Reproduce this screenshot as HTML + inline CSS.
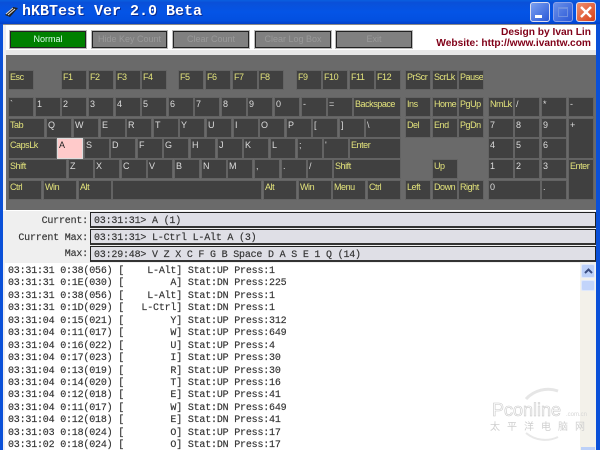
<!DOCTYPE html>
<html><head><meta charset="utf-8">
<style>
html,body{margin:0;padding:0}
#w{position:relative;width:600px;height:450px;overflow:hidden;background:#fff;font-family:"Liberation Sans",sans-serif}
#w div,#w b,#w i,#w pre{position:absolute;display:block;margin:0;font-style:normal}
#tb{left:0;top:0;width:600px;height:24px;background:linear-gradient(#0a5fe0 0,#0a50d8 10%,#0454e6 50%,#0350e0 85%,#0340c8 100%)}
#t{left:22px;top:3px;font:bold 15px/18px "Liberation Mono",monospace;color:#fff;white-space:pre;text-shadow:1px 1px 0 #0a2a90}
.bt{width:20px;height:20px;top:2px;border:1px solid #dde;box-sizing:border-box;border-radius:3px}
.btn{top:31px;height:17px;box-sizing:border-box;border:1px solid #222;outline:1px solid #bbb;background:#808080;color:#999;font-size:9px;line-height:15px;text-align:center;white-space:nowrap}
#kb{left:6px;top:55px;width:590px;height:155px;background:#6a6a6a}
.k{background:#404040;box-sizing:border-box;border:1px solid #636363;color:#e4e47c;font-weight:normal;font-size:9px;letter-spacing:-.45px;line-height:11px;padding:1px 0 0 1px;white-space:nowrap;overflow:hidden}
.n{color:#ddd}
.r1{top:70px;height:20px}.r2{top:97px;height:20px}.r3{top:118px;height:20px}.r4{top:138px;height:21px}.r5{top:159px;height:20px}.r6{top:180px;height:20px}
.u{width:26px}
.f{left:90px;width:506px;height:16px;box-sizing:border-box;border:1px solid #222;border-bottom:2px solid #333;background:#dfdfe6;font:10px/17px "Liberation Mono",monospace;color:#333;padding-left:3px;white-space:pre;letter-spacing:-.2px;-webkit-text-stroke:.15px #333}
.l{left:0;width:88px;text-align:right;font:10px/15px "Liberation Mono",monospace;color:#333;white-space:pre;letter-spacing:-.2px;-webkit-text-stroke:.15px #333}
#log{left:8px;top:266px;font:10px/12.43px "Liberation Mono",monospace;color:#333;letter-spacing:-.2px;white-space:pre;-webkit-text-stroke:.15px #333}
</style></head><body><div id="w">
<div style="left:3px;top:24px;width:594px;height:426px;background:#eeeef2"></div>
<div style="left:6px;top:24px;width:590px;height:31px;background:#fff;border-top:1px solid #999;box-sizing:border-box"></div>
<div style="left:6px;top:50px;width:590px;height:5px;background:#e8e8e8"></div>
<div id="tb"></div>
<div style="left:0;top:24px;width:3px;height:426px;background:#0a50d8"></div>
<div style="left:596px;top:24px;width:4px;height:426px;background:#0a50d8"></div>
<div style="left:3px;top:24px;width:593px;height:1px;background:#8a8a8a"></div>
<svg style="position:absolute;left:3px;top:5px" width="16" height="13" viewBox="0 0 16 13"><path d="M2 10 L10 2 L15 3 L7 12 Z" fill="#222"/><path d="M3 9 L10 3 M5 10 L12 4" stroke="#ddd" stroke-width="1"/></svg>
<div id="t">hKBTest Ver 2.0 Beta</div>
<div class="bt" style="left:530px;background:linear-gradient(135deg,#7ba0f0,#2a58d8)"><i style="left:4px;top:12px;width:7px;height:3px;background:#fff"></i></div>
<div class="bt" style="left:553px;background:linear-gradient(135deg,#6a90e8,#2a58d8);border-color:#88a0e8"><i style="left:4px;top:4px;width:10px;height:10px;border:1px solid #6f90e0;border-top-width:2px;box-sizing:border-box"></i></div>
<div class="bt" style="left:576px;background:linear-gradient(135deg,#ee9070,#d84018)"><svg style="position:absolute;left:2px;top:2px" width="14" height="14"><path d="M2 2 L12 12 M12 2 L2 12" stroke="#fff" stroke-width="2.4"/></svg></div>

<div class="btn" style="left:10px;width:76px;background:#008000;color:#dfe;">Normal</div>
<div class="btn" style="left:92px;width:75px">Hide Key Count</div>
<div class="btn" style="left:173px;width:76px">Clear Count</div>
<div class="btn" style="left:255px;width:76px">Clear Log Box</div>
<div class="btn" style="left:336px;width:76px">Exit</div>
<div style="right:9px;top:27px;text-align:right;font:bold 10.2px/11px 'Liberation Sans',sans-serif;color:#800018;white-space:nowrap">Design by Ivan Lin<br>Website: http://www.ivantw.com</div>

<div id="kb"></div>
<b class="k r1 u" style="left:8px">Esc</b>
<b class="k r1 u" style="left:61px">F1</b><b class="k r1 u" style="left:88px">F2</b><b class="k r1 u" style="left:115px">F3</b><b class="k r1 u" style="left:141px">F4</b>
<b class="k r1 u" style="left:178px">F5</b><b class="k r1 u" style="left:205px">F6</b><b class="k r1 u" style="left:232px">F7</b><b class="k r1 u" style="left:258px">F8</b>
<b class="k r1 u" style="left:296px">F9</b><b class="k r1 u" style="left:322px">F10</b><b class="k r1 u" style="left:349px">F11</b><b class="k r1 u" style="left:375px">F12</b>
<b class="k r1 u" style="left:405px">PrScr</b><b class="k r1 u" style="left:432px">ScrLk</b><b class="k r1 u" style="left:458px">Pause</b>

<b class="k n r2 u" style="left:8px">`</b><b class="k n r2 u" style="left:35px">1</b><b class="k n r2 u" style="left:61px">2</b><b class="k n r2 u" style="left:88px">3</b><b class="k n r2 u" style="left:115px">4</b><b class="k n r2 u" style="left:141px">5</b><b class="k n r2 u" style="left:168px">6</b><b class="k n r2 u" style="left:194px">7</b><b class="k n r2 u" style="left:221px">8</b><b class="k n r2 u" style="left:247px">9</b><b class="k n r2 u" style="left:274px">0</b><b class="k n r2 u" style="left:301px">-</b><b class="k n r2 u" style="left:327px">=</b>
<b class="k r2" style="left:353px;width:48px">Backspace</b>
<b class="k r2 u" style="left:405px">Ins</b><b class="k r2 u" style="left:432px">Home</b><b class="k r2 u" style="left:458px">PgUp</b>
<b class="k r2 u" style="left:488px">NmLk</b><b class="k n r2 u" style="left:514px">/</b><b class="k n r2 u" style="left:541px">*</b><b class="k n r2 u" style="left:568px">-</b>

<b class="k r3" style="left:8px;width:37px">Tab</b>
<b class="k n r3 u" style="left:46px">Q</b><b class="k n r3 u" style="left:73px">W</b><b class="k n r3 u" style="left:100px">E</b><b class="k n r3 u" style="left:126px">R</b><b class="k n r3 u" style="left:153px">T</b><b class="k n r3 u" style="left:179px">Y</b><b class="k n r3 u" style="left:206px">U</b><b class="k n r3 u" style="left:233px">I</b><b class="k n r3 u" style="left:259px">O</b><b class="k n r3 u" style="left:286px">P</b><b class="k n r3 u" style="left:312px">[</b><b class="k n r3 u" style="left:339px">]</b>
<b class="k n r3" style="left:365px;width:36px">\</b>
<b class="k r3 u" style="left:405px">Del</b><b class="k r3 u" style="left:432px">End</b><b class="k r3 u" style="left:458px">PgDn</b>
<b class="k n r3 u" style="left:488px">7</b><b class="k n r3 u" style="left:514px">8</b><b class="k n r3 u" style="left:541px">9</b>
<b class="k n u" style="left:568px;top:118px;height:41px">+</b>

<b class="k r4" style="left:8px;width:49px">CapsLk</b>
<b class="k r4 u" style="left:57px;background:#ffcaca;color:#222;border-color:#ddd">A</b>
<b class="k n r4 u" style="left:84px">S</b><b class="k n r4 u" style="left:110px">D</b><b class="k n r4 u" style="left:137px">F</b><b class="k n r4 u" style="left:163px">G</b><b class="k n r4 u" style="left:190px">H</b><b class="k n r4 u" style="left:217px">J</b><b class="k n r4 u" style="left:243px">K</b><b class="k n r4 u" style="left:270px">L</b><b class="k n r4 u" style="left:297px">;</b><b class="k n r4 u" style="left:323px">'</b>
<b class="k r4" style="left:349px;width:52px">Enter</b>
<b class="k n r4 u" style="left:488px">4</b><b class="k n r4 u" style="left:514px">5</b><b class="k n r4 u" style="left:541px">6</b>

<b class="k r5" style="left:8px;width:59px">Shift</b>
<b class="k n r5 u" style="left:68px">Z</b><b class="k n r5 u" style="left:94px">X</b><b class="k n r5 u" style="left:121px">C</b><b class="k n r5 u" style="left:147px">V</b><b class="k n r5 u" style="left:174px">B</b><b class="k n r5 u" style="left:201px">N</b><b class="k n r5 u" style="left:227px">M</b><b class="k n r5 u" style="left:254px">,</b><b class="k n r5 u" style="left:281px">.</b><b class="k n r5 u" style="left:307px">/</b>
<b class="k r5" style="left:333px;width:68px">Shift</b>
<b class="k r5 u" style="left:432px">Up</b>
<b class="k n r5 u" style="left:488px">1</b><b class="k n r5 u" style="left:514px">2</b><b class="k n r5 u" style="left:541px">3</b>
<b class="k u" style="left:568px;top:159px;height:41px">Enter</b>

<b class="k r6" style="left:8px;width:34px">Ctrl</b><b class="k r6" style="left:43px;width:34px">Win</b><b class="k r6" style="left:78px;width:34px">Alt</b>
<b class="k r6" style="left:112px;width:150px"></b>
<b class="k r6" style="left:263px;width:34px">Alt</b><b class="k r6" style="left:298px;width:34px">Win</b><b class="k r6" style="left:332px;width:34px">Menu</b><b class="k r6" style="left:367px;width:34px">Ctrl</b>
<b class="k r6 u" style="left:405px">Left</b><b class="k r6 u" style="left:432px">Down</b><b class="k r6 u" style="left:458px">Right</b>
<b class="k n r6" style="left:488px;width:53px">0</b><b class="k n r6 u" style="left:541px">.</b>

<div style="left:3px;top:210px;width:593px;height:54px;background:#efefef;border-top:1px solid #fff;box-sizing:border-box"></div>
<div class="l" style="top:214px">Current:</div><div class="f" style="top:212px">03:31:31&gt; A (1)</div>
<div class="l" style="top:231px">Current Max:</div><div class="f" style="top:229px">03:31:31&gt; L-Ctrl L-Alt A (3)</div>
<div class="l" style="top:247px">Max:</div><div class="f" style="top:246px">03:29:48&gt; V Z X C F G B Space D A S E 1 Q (14)</div>

<div style="left:5px;top:263px;width:575px;height:187px;background:#fff"></div>
<pre id="log">03:31:31 0:38(056) [    L-Alt] Stat:UP Press:1
03:31:31 0:1E(030) [        A] Stat:DN Press:225
03:31:31 0:38(056) [    L-Alt] Stat:DN Press:1
03:31:31 0:1D(029) [   L-Ctrl] Stat:DN Press:1
03:31:04 0:15(021) [        Y] Stat:UP Press:312
03:31:04 0:11(017) [        W] Stat:UP Press:649
03:31:04 0:16(022) [        U] Stat:UP Press:4
03:31:04 0:17(023) [        I] Stat:UP Press:30
03:31:04 0:13(019) [        R] Stat:UP Press:30
03:31:04 0:14(020) [        T] Stat:UP Press:16
03:31:04 0:12(018) [        E] Stat:UP Press:41
03:31:04 0:11(017) [        W] Stat:DN Press:649
03:31:04 0:12(018) [        E] Stat:DN Press:41
03:31:03 0:18(024) [        O] Stat:UP Press:17
03:31:02 0:18(024) [        O] Stat:DN Press:17</pre>

<div style="left:580px;top:263px;width:16px;height:187px;background:#f3f1ea"></div>
<div style="left:581px;top:264px;width:14px;height:14px;background:#bcd0f8;border:1px solid #dfe8fb;box-sizing:border-box;border-radius:2px"><svg style="position:absolute;left:2px;top:3px" width="9" height="6"><path d="M1 5 L4.5 1.5 L8 5" fill="none" stroke="#3a4d80" stroke-width="2"/></svg></div>
<div style="left:581px;top:280px;width:14px;height:11px;background:#c2d4fa;border:1px solid #dfe8fb;box-sizing:border-box;border-radius:2px"></div>
<div style="left:581px;top:447px;width:14px;height:3px;background:#bcd0f8"></div>

<svg style="position:absolute;left:520px;top:385px" width="50" height="60"><path d="M6 14 A30 30 0 0 1 38 6" fill="none" stroke="#e6e6e6" stroke-width="3"/><path d="M6 48 A30 30 0 0 0 38 52" fill="none" stroke="#e8e8e8" stroke-width="2"/></svg>
<div style="left:492px;top:400px;font:18px/20px 'Liberation Sans',sans-serif;color:#fff;-webkit-text-stroke:.6px #c9c9c9;white-space:nowrap">Pconline</div>
<div style="left:566px;top:412px;font:6px/7px 'Liberation Sans',sans-serif;color:#d6d6d6">.com.cn</div>
<div style="left:490px;top:420px;font:10px/12px 'Noto Sans CJK SC',sans-serif;color:#cfcfcf;letter-spacing:7px;white-space:nowrap">太平洋电脑网</div>
</div></body></html>
